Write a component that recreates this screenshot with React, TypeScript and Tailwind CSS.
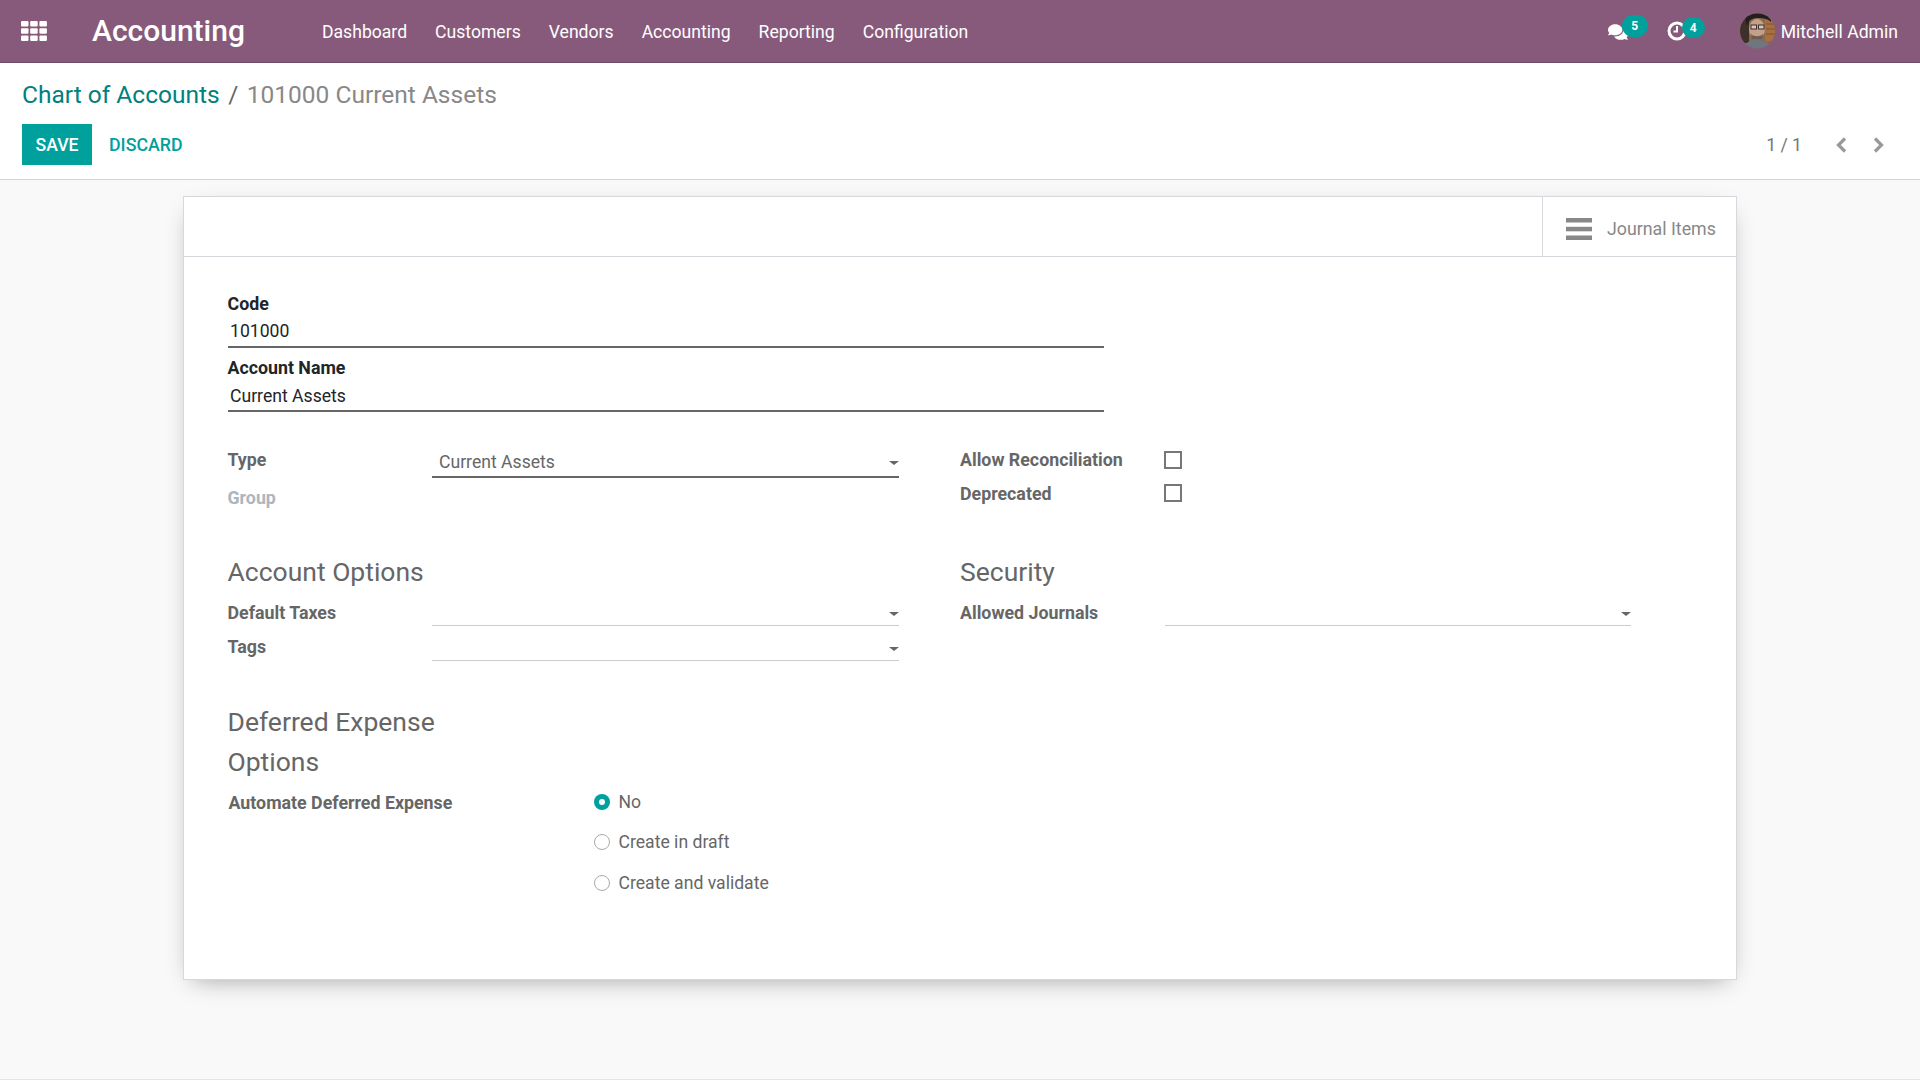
import { FaComments } from "react-icons/fa";

const navItems = ["Dashboard", "Customers", "Vendors", "Accounting", "Reporting", "Configuration"];

function Caret() {
  return <span className="h-0 w-0 border-x-[5px] border-t-[4px] border-x-transparent border-t-[#666]" />;
}

function Many2One({ className, value }: { className: string; value?: string }) {
  return (
    <div className={`flex items-center justify-between ${className}`}>
      <span className="pl-[7px] text-[#666]">{value}</span>
      <span className="flex pt-[1px]"><Caret /></span>
    </div>
  );
}

function Radio({ label, checked }: { label: string; checked?: boolean }) {
  return (
    <div className="flex h-[40.5px] items-center">
      {checked ? (
        <span className="flex h-[16px] w-[16px] items-center justify-center rounded-full bg-[#00a09d]">
          <span className="h-[6px] w-[6px] rounded-full bg-white" />
        </span>
      ) : (
        <span className="h-[16px] w-[16px] rounded-full border border-[#aaa] bg-white" />
      )}
      <span className="ml-[8.5px] text-[#666]">{label}</span>
    </div>
  );
}

function Chevron({ points }: { points: string }) {
  return (
    <svg width="11" height="16" viewBox="0 0 11 16" fill="none" stroke="#999" strokeWidth="3.2">
      <polyline points={points} />
    </svg>
  );
}

function Avatar() {
  return (
    <svg width="35" height="36" viewBox="0 0 35 36" className="shrink-0">
      <defs>
        <clipPath id="av"><circle cx="17.5" cy="18" r="17.5" /></clipPath>
      </defs>
      <g clipPath="url(#av)">
        <rect width="35" height="36" fill="#8a6a4e" />
        <rect x="25" y="6" width="10" height="22" fill="#a8703f" />
        <path d="M26 11h9M26 16h9M26 21h9" stroke="#7c5233" strokeWidth="1" />
        <rect x="0" y="4" width="9" height="26" fill="#3d302a" />
        <path d="M4 0h27v9c-3-3-7-4-13-4S9 7 7 13z" fill="#241d1d" />
        <ellipse cx="17" cy="16" rx="8" ry="10" fill="#c4a08a" />
        <rect x="11" y="12" width="5.5" height="4" fill="#d9c6b8" stroke="#3a2f2b" strokeWidth="1" />
        <rect x="18.5" y="12" width="5.5" height="4" fill="#d9c6b8" stroke="#3a2f2b" strokeWidth="1" />
        <path d="M11 21c3 3 9 3 12 0l-1 5h-10z" fill="#6e5b52" />
        <path d="M4 36c1-7 6-9 13-9s12 2 14 9z" fill="#6f7680" />
      </g>
    </svg>
  );
}

export default function App() {
  return (
    <div className="flex h-[1080px] flex-col overflow-hidden border-b border-[#e5e5e5] bg-[#f9f9f9] font-['Roboto',sans-serif] text-[17.6px] leading-[24px] text-[#666]">
      {/* Navbar */}
      <header className="flex h-[63px] shrink-0 items-center border-b border-[#6f4a66] bg-[#875a7b] text-white">
        <svg width="26" height="20" viewBox="0 0 26 20" className="ml-[21px] fill-white">
          <rect x="0" y="0" width="7.5" height="5.5" rx="1" />
          <rect x="9.2" y="0" width="7.5" height="5.5" rx="1" />
          <rect x="18.4" y="0" width="7.5" height="5.5" rx="1" />
          <rect x="0" y="7.2" width="7.5" height="5.5" rx="1" />
          <rect x="9.2" y="7.2" width="7.5" height="5.5" rx="1" />
          <rect x="18.4" y="7.2" width="7.5" height="5.5" rx="1" />
          <rect x="0" y="14.4" width="7.5" height="5.5" rx="1" />
          <rect x="9.2" y="14.4" width="7.5" height="5.5" rx="1" />
          <rect x="18.4" y="14.4" width="7.5" height="5.5" rx="1" />
        </svg>
        <span className="ml-[45px] w-[230px] text-[30px] font-medium leading-none">Accounting</span>
        <nav className="flex gap-[28px] pt-[2px]">
          {navItems.map((item) => (
            <span key={item}>{item}</span>
          ))}
        </nav>
        <div className="ml-auto flex items-center pr-[22px]">
          <div className="relative mr-[20px] h-[30px] w-[41px]">
            <FaComments className="absolute left-[1px] top-[6px] text-[20px]" />
            <span className="absolute left-[15px] top-[-1px] flex h-[22px] w-[26px] items-center justify-center rounded-full bg-[#00a09d] text-[12px] font-bold">5</span>
          </div>
          <div className="relative mr-[35px] h-[30px] w-[37px]">
            <svg width="20" height="20" viewBox="0 0 20 20" fill="none" stroke="white" className="absolute left-[-1px] top-[5px]">
              <circle cx="10" cy="10" r="8" strokeWidth="3" />
              <path d="M10 5v5.5H6.5" strokeWidth="2" />
            </svg>
            <span className="absolute left-[14px] top-[1px] flex h-[21px] w-[23px] items-center justify-center rounded-full bg-[#00a09d] text-[12px] font-bold">4</span>
          </div>
          <Avatar />
          <span className="ml-[6px] pt-[2px]">Mitchell Admin</span>
        </div>
      </header>

      {/* Control panel */}
      <div className="h-[117px] shrink-0 border-b border-[#ced4da] bg-white pl-[22px] pr-[36px]">
        <div className="flex h-[61px] items-center pt-[2px] text-[24.5px]">
          <span className="text-[#00817e]">Chart of Accounts</span>
          <span className="mx-[8.5px] text-[#666]">/</span>
          <span className="text-[#888]">101000 Current Assets</span>
        </div>
        <div className="flex items-center">
          <button className="h-[41px] w-[70px] bg-[#00a09d] font-medium text-white">SAVE</button>
          <button className="ml-[17px] text-[17.8px] font-medium text-[#00a09d]">DISCARD</button>
          <div className="ml-auto flex items-center text-[#777]">
            <span className="mr-[34px]">1 / 1</span>
            <span className="mr-[26px] flex"><Chevron points="9,1.5 2.5,8 9,14.5" /></span>
            <Chevron points="2,1.5 8.5,8 2,14.5" />
          </div>
        </div>
      </div>

      {/* Sheet */}
      <div className="pt-[16px]">
        <div className="mx-auto h-[784px] w-[1554px] border border-[#d5d9de] bg-white shadow-[0_8px_24px_-10px_rgba(0,0,0,0.4)]">
          <div className="flex h-[60px] justify-end border-b border-[#d5d9de]">
            <div className="flex w-[194px] items-center border-l border-[#d5d9de] pl-[23px] pt-[4px]">
              <svg width="26" height="22" viewBox="0 0 26 22" className="fill-[#888]">
                <rect width="26" height="4.5" y="0" />
                <rect width="26" height="4.5" y="8.8" />
                <rect width="26" height="4.5" y="17.5" />
              </svg>
              <span className="ml-[15px] text-[17.8px] text-[#888]">Journal Items</span>
            </div>
          </div>

          <div className="pl-[43.5px] pt-[35px] [&_b]:text-[17.8px]">
            {/* Title fields */}
            <div className="w-[876.5px]">
              <b className="block font-bold text-[#212529]">Code</b>
              <div className="h-[32px] border-b-2 border-[#666] pl-[2.5px] pt-[3px] text-[#212529]">101000</div>
              <b className="mt-[8px] block font-bold text-[#212529]">Account Name</b>
              <div className="h-[32px] border-b-2 border-[#666] pl-[2.5px] pt-[4px] text-[#212529]">Current Assets</div>
            </div>

            {/* Type / flags */}
            <div className="mt-[36px] flex">
              <div className="w-[732.5px]">
                <div className="flex">
                  <b className="w-[204.5px] font-bold">Type</b>
                  <Many2One className="h-[30px] w-[467px] border-b-2 border-[#666]" value="Current Assets" />
                </div>
                <b className="mt-[8px] block font-bold text-[#adb5bd]">Group</b>
              </div>
              <div>
                <div className="flex h-[33px]">
                  <b className="w-[204px] font-bold">Allow Reconciliation</b>
                  <span className="mt-[3px] h-[18px] w-[18px] border-2 border-[#777]" />
                </div>
                <div className="flex">
                  <b className="w-[204px] pt-[1px] font-bold">Deprecated</b>
                  <span className="mt-[3px] h-[18px] w-[18px] border-2 border-[#777]" />
                </div>
              </div>
            </div>

            {/* Options */}
            <div className="mt-[42px] flex">
              <div className="w-[732.5px]">
                <div className="text-[26.5px] leading-[40px]">Account Options</div>
                <div className="mt-[9px] flex">
                  <b className="w-[204.5px] font-bold">Default Taxes</b>
                  <Many2One className="h-[25px] w-[467px] border-b border-[#ccc]" />
                </div>
                <div className="mt-[9px] flex">
                  <b className="w-[204.5px] font-bold">Tags</b>
                  <Many2One className="h-[26px] w-[467px] border-b border-[#ccc] pt-[2px]" />
                </div>
              </div>
              <div>
                <div className="text-[26.5px] leading-[40px]">Security</div>
                <div className="mt-[9px] flex">
                  <b className="w-[205px] font-bold">Allowed Journals</b>
                  <Many2One className="h-[25px] w-[466px] border-b border-[#ccc]" />
                </div>
              </div>
            </div>

            {/* Deferred */}
            <div className="mt-[41px] w-[260px] text-[26.5px] leading-[40px]">Deferred Expense Options</div>
            <div className="flex">
              <b className="ml-[1px] w-[365.5px] pt-[9px] font-bold">Automate Deferred Expense</b>
              <div className="-mt-[0.5px]">
                <Radio label="No" checked />
                <Radio label="Create in draft" />
                <Radio label="Create and validate" />
              </div>
            </div>
          </div>
        </div>
      </div>
    </div>
  );
}
